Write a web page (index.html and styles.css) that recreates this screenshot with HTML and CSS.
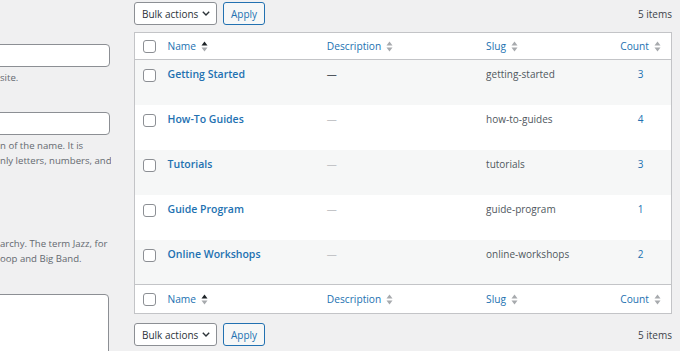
FILE: index.html
```html
<!DOCTYPE html>
<html lang="en">
<head>
  <meta charset="UTF-8">
  <title>Categories</title>
  <link rel="stylesheet" href="styles.css">
</head>
<body>
  <div class="wrap">
    <div class="col-left">
      <input type="text" class="field field-name">
      <p class="desc desc-name">site.</p>
      <input type="text" class="field field-slug">
      <p class="desc desc-slug">n of the name. It is<br>nly letters, numbers, and</p>
      <p class="desc desc-parent">archy. The term Jazz, for<br>oop and Big Band.</p>
      <textarea class="field field-text"></textarea>
    </div>

    <div class="col-right">
      <div class="tablenav top">
        <div class="actions">
          <div class="bulk-select">Bulk actions
            <svg class="chevron" width="8" height="5" viewBox="0 0 8 5"><path d="M0.8 0.8 L4 4 L7.2 0.8" fill="none" stroke="#2c3338" stroke-width="1.4"/></svg>
          </div>
          <button class="btn-apply">Apply</button>
        </div>
        <span class="count-items">5 items</span>
      </div>

      <table class="list-table">
        <colgroup>
          <col class="c-cb"><col class="c-name"><col class="c-desc"><col class="c-slug"><col class="c-count">
        </colgroup>
        <thead>
          <tr>
            <th class="cb"><span class="check"></span></th>
            <th><span class="sort">Name <svg class="ind" width="7" height="13" viewBox="0 0 7 13"><polygon points="0.5,5.5 3.5,1.5 6.5,5.5" fill="#1d2327"/><polygon points="0.5,7.5 3.5,11.5 6.5,7.5" fill="#a7aaad"/></svg></span></th>
            <th><span class="sort">Description <svg class="ind" width="7" height="13" viewBox="0 0 7 13"><polygon points="0.5,5.5 3.5,1.5 6.5,5.5" fill="#a7aaad"/><polygon points="0.5,7.5 3.5,11.5 6.5,7.5" fill="#a7aaad"/></svg></span></th>
            <th><span class="sort">Slug <svg class="ind" width="7" height="13" viewBox="0 0 7 13"><polygon points="0.5,5.5 3.5,1.5 6.5,5.5" fill="#a7aaad"/><polygon points="0.5,7.5 3.5,11.5 6.5,7.5" fill="#a7aaad"/></svg></span></th>
            <th class="num"><span class="sort">Count <svg class="ind" width="7" height="13" viewBox="0 0 7 13"><polygon points="0.5,5.5 3.5,1.5 6.5,5.5" fill="#a7aaad"/><polygon points="0.5,7.5 3.5,11.5 6.5,7.5" fill="#a7aaad"/></svg></span></th>
          </tr>
        </thead>
        <tbody>
          <tr class="alt">
            <td class="cb"><span class="check"></span></td>
            <td><a class="row-title">Getting Started</a></td>
            <td><span class="dash dark">—</span></td>
            <td class="slug">getting-started</td>
            <td class="num"><a class="count-link">3</a></td>
          </tr>
          <tr>
            <td class="cb"><span class="check"></span></td>
            <td><a class="row-title">How-To Guides</a></td>
            <td><span class="dash">—</span></td>
            <td class="slug">how-to-guides</td>
            <td class="num"><a class="count-link">4</a></td>
          </tr>
          <tr class="alt">
            <td class="cb"><span class="check"></span></td>
            <td><a class="row-title">Tutorials</a></td>
            <td><span class="dash">—</span></td>
            <td class="slug">tutorials</td>
            <td class="num"><a class="count-link">3</a></td>
          </tr>
          <tr>
            <td class="cb"><span class="check"></span></td>
            <td><a class="row-title">Guide Program</a></td>
            <td><span class="dash">—</span></td>
            <td class="slug">guide-program</td>
            <td class="num"><a class="count-link">1</a></td>
          </tr>
          <tr class="alt">
            <td class="cb"><span class="check"></span></td>
            <td><a class="row-title">Online Workshops</a></td>
            <td><span class="dash">—</span></td>
            <td class="slug">online-workshops</td>
            <td class="num"><a class="count-link">2</a></td>
          </tr>
        </tbody>
        <tfoot>
          <tr>
            <th class="cb"><span class="check"></span></th>
            <th><span class="sort">Name <svg class="ind" width="7" height="13" viewBox="0 0 7 13"><polygon points="0.5,5.5 3.5,1.5 6.5,5.5" fill="#1d2327"/><polygon points="0.5,7.5 3.5,11.5 6.5,7.5" fill="#a7aaad"/></svg></span></th>
            <th><span class="sort">Description <svg class="ind" width="7" height="13" viewBox="0 0 7 13"><polygon points="0.5,5.5 3.5,1.5 6.5,5.5" fill="#a7aaad"/><polygon points="0.5,7.5 3.5,11.5 6.5,7.5" fill="#a7aaad"/></svg></span></th>
            <th><span class="sort">Slug <svg class="ind" width="7" height="13" viewBox="0 0 7 13"><polygon points="0.5,5.5 3.5,1.5 6.5,5.5" fill="#a7aaad"/><polygon points="0.5,7.5 3.5,11.5 6.5,7.5" fill="#a7aaad"/></svg></span></th>
            <th class="num"><span class="sort">Count <svg class="ind" width="7" height="13" viewBox="0 0 7 13"><polygon points="0.5,5.5 3.5,1.5 6.5,5.5" fill="#a7aaad"/><polygon points="0.5,7.5 3.5,11.5 6.5,7.5" fill="#a7aaad"/></svg></span></th>
          </tr>
        </tfoot>
      </table>

      <div class="tablenav bottom">
        <div class="actions">
          <div class="bulk-select">Bulk actions
            <svg class="chevron" width="8" height="5" viewBox="0 0 8 5"><path d="M0.8 0.8 L4 4 L7.2 0.8" fill="none" stroke="#2c3338" stroke-width="1.4"/></svg>
          </div>
          <button class="btn-apply">Apply</button>
        </div>
        <span class="count-items">5 items</span>
      </div>
    </div>
  </div>
</body>
</html>
```

FILE: styles.css
```css
/* Reset */
* {
  margin: 0;
  padding: 0;
  box-sizing: border-box;
}

html,
body {
  overflow: hidden;
}

body {
  font-family: 'Open Sans', 'Noto Sans', sans-serif;
  font-size: 10px;
  color: #3c434a;
  background: #f0f0f1;
  width: 680px;
  height: 351px;
}

.wrap {
  display: flex;
  gap: 23px;
  height: 351px;
}

/* Left form column (cut off on the left) */
.col-left {
  width: 111px;
  flex: none;
  overflow: hidden;
  padding-top: 44px;
}

.field {
  display: block;
  background: #fff;
  border: 1px solid #8c8f94;
  border-radius: 4px;
  width: 140px;
  margin-left: -30px;
}

.field-name,
.field-slug {
  height: 23px;
}

.field-text {
  height: 70px;
  width: 139px;
  resize: none;
  margin-top: 27px;
}

.desc {
  color: #646970;
  font-size: 9.6px;
  line-height: 15.5px;
  white-space: nowrap;
}

.desc-name {
  margin-top: 3px;
  margin-bottom: 26px;
}

.desc-slug {
  margin-top: 3px;
}

.desc-parent {
  margin-top: 67px;
}

/* Right column */
.col-right {
  width: 538px;
  flex: none;
}

.tablenav {
  display: flex;
  justify-content: space-between;
  align-items: center;
  height: 23px;
}

.tablenav.top {
  margin-top: 2px;
  margin-bottom: 7px;
}

.tablenav.bottom {
  margin-top: 9px;
}

.actions {
  display: flex;
  gap: 6px;
}

.bulk-select {
  display: flex;
  align-items: center;
  justify-content: space-between;
  width: 83px;
  height: 23px;
  padding: 0 6px 0 7px;
  background: #fff;
  border: 1px solid #8c8f94;
  border-radius: 3px;
  color: #2c3338;
  white-space: nowrap;
}

.btn-apply {
  font-family: inherit;
  font-size: 10px;
  width: 42px;
  height: 23px;
  color: #2271b1;
  background: #f6f7f7;
  border: 1px solid #2271b1;
  border-radius: 3px;
}

.count-items {
  color: #3c434a;
}

/* Table */
.list-table {
  width: 538px;
  table-layout: fixed;
  border-collapse: collapse;
  border: 1px solid #c3c4c7;
  background: #fff;
}

.c-cb { width: 25px; }
.c-name { width: 159px; }
.c-desc { width: 159px; }
.c-slug { width: 132px; }
.c-count { width: 61px; }

.list-table th {
  height: 27px;
  text-align: left;
  font-weight: normal;
  vertical-align: middle;
  padding: 0 8px;
  color: #2271b1;
  font-size: 10.2px;
}

.list-table tfoot th {
  height: 29px;
}

.list-table thead tr {
  border-bottom: 1px solid #c3c4c7;
}

.list-table tfoot tr {
  border-top: 1px solid #c3c4c7;
}

.list-table td {
  height: 45px;
  vertical-align: top;
  padding: 6px 8px 0;
  line-height: 16px;
}

.list-table tr.alt td {
  background: #f6f7f7;
}

.list-table .cb {
  padding: 0 0 0 8px;
}

.list-table td.cb {
  padding-top: 9px;
}

.check {
  display: block;
  width: 13px;
  height: 13px;
  border: 1px solid #8c8f94;
  border-radius: 3px;
  background: #fff;
}

.sort {
  display: inline-flex;
  align-items: center;
  gap: 5px;
  white-space: nowrap;
}

.ind {
  display: block;
}

.list-table .num {
  text-align: center;
  padding-left: 0;
  padding-right: 0;
}

.row-title {
  color: #2271b1;
  font-weight: 600;
  font-size: 10.5px;
}

.dash {
  color: #c3c4c7;
}

.dash.dark {
  color: #50575e;
}

.slug {
  color: #50575e;
}

.count-link {
  color: #2271b1;
}
```
